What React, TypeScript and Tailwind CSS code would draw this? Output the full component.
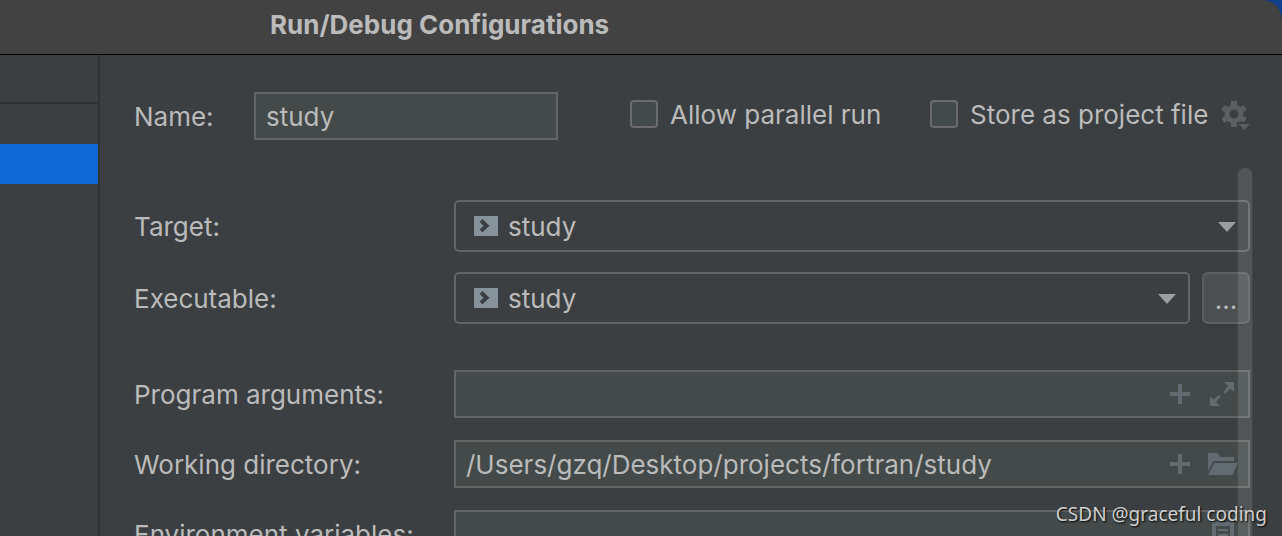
import { useState } from "react";
import type { ReactNode } from "react";

const label = "w-[320px] shrink-0 pt-0.5 text-[26px] leading-8";
const field =
  "h-12 w-full border-2 border-[#646464] bg-[#434a49] pl-[10px] pt-px text-[26px] leading-8 outline-none focus:border-[#4a88c7]";

function PlusIcon() {
  return (
    <svg width="20" height="20" viewBox="0 0 20 20" fill="#616b70">
      <path d="M8 0h4v8h8v4h-8v8H8v-8H0V8h8z" />
    </svg>
  );
}

function ExpandIcon() {
  return (
    <svg width="24" height="24" viewBox="0 0 24 24" fill="#616b70">
      <path d="M14 0h10v10l-3.500-3.500-5.300 5.300-1.800-1.800 4.800-5.800z M0 14l3.500 3.500 5.300-4.500 1.800 1.800-4.600 5.200L10 24H0z" />
    </svg>
  );
}

function FolderIcon() {
  return (
    <svg width="30" height="22" viewBox="0 0 30 22" fill="#616b70">
      <path d="M0 0h9.500l3 4H26v4H5.500L0 18z" />
      <path d="M6.500 10H30l-5.500 12H0z" />
    </svg>
  );
}

function ListIcon() {
  return (
    <svg width="22" height="24" viewBox="0 0 22 24" fill="none" stroke="#616b70">
      <path d="M2 24V2h18v22" strokeWidth="4" />
      <path d="M6 8h10M6 13h10M6 18h10" strokeWidth="2" />
    </svg>
  );
}

function GearIcon() {
  return (
    <svg width="28" height="30" viewBox="0 0 28 30" fill="#5c5e5f">
      <g transform="translate(12 13)">
        <path
          fillRule="evenodd"
          d="M0-9.500A9.500 9.500 0 1 1 0 9.500 9.500 9.500 0 1 1 0-9.500zM0-4.500A4.500 4.500 0 1 0 0 4.500 4.500 4.500 0 1 0 0-4.500z"
        />
        {[0, 60, 120, 180, 240, 300].map((angle) => (
          <path key={angle} d="M-3-13h6v5h-6z" transform={`rotate(${angle})`} />
        ))}
      </g>
      <path d="M14 21h16l-8 8z" fill="#3c3f41" />
      <path d="M16.500 23H28l-5.700 6z" />
    </svg>
  );
}

function Dropdown({ id }: { id: string }) {
  return (
    <div className="relative min-w-0 flex-1">
      <select
        id={id}
        className="h-[52px] w-full appearance-none rounded-[5px] border-2 border-[#646464] bg-[#3c3f41] pl-[52px] pt-0.5 text-[26px] leading-8 outline-none"
      >
        <option>study</option>
      </select>
      <svg className="pointer-events-none absolute left-5 top-4" width="24" height="20" viewBox="0 0 24 20">
        <path d="M0 0h24v20H0z" fill="#87939a" />
        <path d="M7 4.500l5.500 5.300L7 15" fill="none" stroke="#3c3f41" strokeWidth="4" />
      </svg>
      <svg className="pointer-events-none absolute right-[14px] top-[22px]" width="18" height="10" viewBox="0 0 18 10">
        <path d="M0 0h18L9 10z" fill="#9a9da1" />
      </svg>
    </div>
  );
}

function TextRow({ id, text, value, children }: { id: string; text: string; value: string; children: ReactNode }) {
  return (
    <div className="flex items-center">
      <label htmlFor={id} className={label}>
        {text}
      </label>
      <div className="relative min-w-0 flex-1">
        <input id={id} type="text" defaultValue={value} className={`${field} pr-24`} />
        <div className="absolute inset-y-0 right-3 flex items-center gap-[18px]">{children}</div>
      </div>
    </div>
  );
}

function Check({ id, text }: { id: string; text: string }) {
  const [checked, setChecked] = useState(false);

  return (
    <div className="flex items-center gap-3">
      <input
        id={id}
        type="checkbox"
        checked={checked}
        onChange={() => setChecked(!checked)}
        className="size-7 shrink-0 appearance-none rounded-[4px] border-2 border-[#6b6b6b] bg-[#434a4b] checked:bg-[#4a88c7]"
      />
      <label htmlFor={id} className="whitespace-nowrap pt-0.5 text-[26px] leading-8">
        {text}
      </label>
    </div>
  );
}

export default function App() {
  return (
    <div className="bg-[#123f8c] font-['Inter',sans-serif] text-[#bbbbbb]">
      <div className="relative flex h-screen flex-col overflow-hidden rounded-tr-[20px] bg-[#3c3f41]">

        {/* Title bar */}
        <header className="shrink-0 rounded-tr-[20px] border-b border-black bg-[#424242] pb-[13px] pl-[270px] pt-[9px]">
          <h1 className="text-[26px] font-bold leading-8">Run/Debug Configurations</h1>
        </header>

        <div className="flex min-h-0 flex-1">

          {/* Configuration tree */}
          <aside className="w-[100px] shrink-0 border-r-2 border-[#323232]">
            <div className="h-[49px] border-b-2 border-[#323232]" />
            <div className="mt-10 h-10 bg-[#1068d4]" />
          </aside>

          {/* Form */}
          <main className="relative min-w-0 flex-1 pl-[34px] pr-8 pt-[37px]">
            <div className="flex items-center">
              <label htmlFor="name" className="w-[120px] shrink-0 pt-0.5 text-[26px] leading-8">
                Name:
              </label>
              <input id="name" type="text" defaultValue="study" className={`${field} max-w-[304px]`} />
              <div className="mb-1 ml-[72px] flex flex-1 items-center justify-between">
                <Check id="parallel" text="Allow parallel run" />
                <div className="flex w-[320px] items-center justify-between">
                  <Check id="store" text="Store as project file" />
                  <button type="button" aria-label="Storage options" className="mt-1">
                    <GearIcon />
                  </button>
                </div>
              </div>
            </div>

            <div className="mt-[60px] flex flex-col gap-5">
              <div className="flex items-center">
                <label htmlFor="target" className={label}>Target:</label>
                <Dropdown id="target" />
              </div>
              <div className="flex items-center">
                <label htmlFor="executable" className={label}>Executable:</label>
                <Dropdown id="executable" />
                <button
                  type="button"
                  aria-label="Browse executable"
                  className="ml-3 flex h-[52px] w-12 shrink-0 items-end justify-center rounded-md border-2 border-[#5e6060] bg-[#4c5052] pb-1.5 text-[26px] leading-8 shadow-sm"
                >
                  ...
                </button>
              </div>
            </div>

            <div className="mt-[46px] flex flex-col gap-[22px]">
              <TextRow id="arguments" text="Program arguments:" value="">
                <button type="button" aria-label="Insert macro"><PlusIcon /></button>
                <button type="button" aria-label="Expand" className="pl-0.5 pr-1"><ExpandIcon /></button>
              </TextRow>
              <TextRow id="directory" text="Working directory:" value="/Users/gzq/Desktop/projects/fortran/study">
                <button type="button" aria-label="Insert macro"><PlusIcon /></button>
                <button type="button" aria-label="Browse folder"><FolderIcon /></button>
              </TextRow>
              <TextRow id="environment" text="Environment variables:" value="">
                <button type="button" aria-label="Edit variables" className="pr-1"><ListIcon /></button>
              </TextRow>
            </div>

            {/* Scrollbar thumb lies over the fields */}
            <div className="pointer-events-none absolute bottom-0 right-[29px] top-[112px] w-4 rounded-t-full border border-b-0 border-black/20 bg-white/12" />
          </main>
        </div>

        <p className="absolute bottom-2 right-[15px] font-['Noto_Sans',sans-serif] text-[19px] leading-7 text-[#d0d0d0] [text-shadow:1px_1px_2px_#000]">
          CSDN @graceful coding
        </p>
      </div>
    </div>
  );
}
